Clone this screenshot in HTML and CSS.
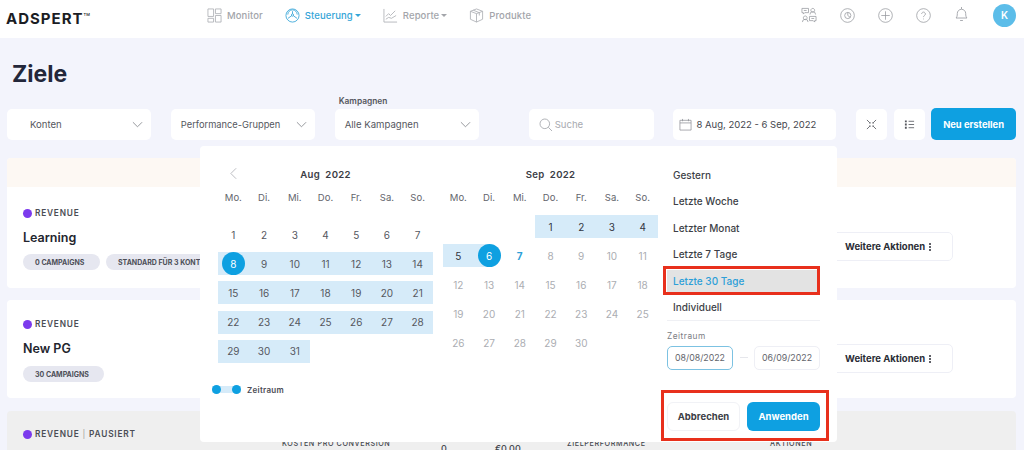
FILE: index.html
```html
<!DOCTYPE html>
<html lang="de">
<head>
<meta charset="utf-8">
<title>Adspert Ziele</title>
<link rel="stylesheet" href="styles.css">
</head>
<body>
<header class="topbar">
  <div class="logo">ADSPERT<sup class="tm">TM</sup></div>
  <nav class="nav">
    <a class="nav-item"><svg class="nav-icon" viewBox="0 0 16 16"><path d="M1 1h6v8H1zM9 1h6v5H9zM9 8h6v7H9zM1 11h6v4H1z"/></svg>Monitor</a>
    <a class="nav-item nav-active"><svg class="nav-icon" viewBox="0 0 16 16"><circle cx="8" cy="8" r="7"/><circle cx="8" cy="7.500" r="1.200"/><path d="M7 8.300 3.200 11M9 8.300l3.800 2.700M8 6.300V3.400M3 7a5 5 0 0 1 10 0"/></svg>Steuerung<i class="caret"></i></a>
    <a class="nav-item"><svg class="nav-icon" viewBox="0 0 16 16"><path d="M1 1v14h14M3 9l3-3 2 2 5-5M3 12l3-2 3 1 5-3"/></svg>Reporte<i class="caret"></i></a>
    <a class="nav-item"><svg class="nav-icon" viewBox="0 0 16 16"><path d="M8 1 14.500 3.500V12L8 15 1.500 12V3.500zM1.500 3.500 8 6l6.500-2.500M8 6v9M4.500 2.300 11 5v3"/></svg>Produkte</a>
  </nav>
  <div class="tools">
    <svg class="tool tool-team" viewBox="0 0 17 17"><path d="M1 1.500h7v4.500H4L2.500 7.500V6H1zM3 3.700h3M12.500 1.500a2 2 0 1 1-.01 0zM9.500 8a3 3 0 0 1 6 0M4.500 9.500a2 2 0 1 1-.01 0zM1.500 16a3 3 0 0 1 6 0M9 10h7v4.500h-1.500V16L13 14.500H9zM11 12.200h3"/></svg>
    <svg class="tool" viewBox="0 0 16 16"><circle cx="8" cy="8" r="7.300"/><circle cx="8.300" cy="8" r="3.300"/><path d="M8.300 4.700V8l2.600 2"/></svg>
    <svg class="tool" viewBox="0 0 16 16"><circle cx="8" cy="8" r="7.300"/><path d="M8 3.500v9M3.500 8h9"/></svg>
    <svg class="tool" viewBox="0 0 16 16"><circle cx="8" cy="8" r="7.300"/><path d="M6 6.300a2 2 0 1 1 3 1.800c-.7.400-1 .8-1 1.600M8 11.300v.8"/></svg>
    <svg class="tool tool-bell" viewBox="0 0 14 16"><path d="M1.500 12c1-1 1.300-2.200 1.300-4.500a4.200 4.200 0 0 1 8.400 0c0 2.300.3 3.500 1.300 4.500zM5.600 14.500h2.800M7 1v2"/></svg>
    <div class="avatar">K</div>
  </div>
</header>

<main class="page">
  <h1 class="title">Ziele</h1>

  <div class="toolbar">
    <div class="select select-konten"><span>Konten</span><svg class="chev" viewBox="0 0 12 7"><path d="M1 1l5 5 5-5"/></svg></div>
    <div class="select select-perf"><span>Performance-Gruppen</span><svg class="chev" viewBox="0 0 12 7"><path d="M1 1l5 5 5-5"/></svg></div>
    <div class="field">
      <label class="field-label">Kampagnen</label>
      <div class="select select-camp"><span>Alle Kampagnen</span><svg class="chev" viewBox="0 0 12 7"><path d="M1 1l5 5 5-5"/></svg></div>
    </div>
    <div class="box search"><svg class="search-icon" viewBox="0 0 14 14"><circle cx="5.800" cy="5.800" r="4.800"/><path d="M9.300 9.300 13 13"/></svg><span>Suche</span></div>
    <div class="box datebox"><svg class="cal-icon" viewBox="0 0 14 14"><path d="M1 2.500h12V13H1zM1 5.300h12M3.800 1v2.500M10.200 1v2.500"/></svg><span>8 Aug, 2022 - 6 Sep, 2022</span></div>
    <div class="box iconbox iconbox-a"><svg class="mini" viewBox="0 0 12 12"><path d="M1 1l3 3M11 1 8 4M1 11l3-3M11 11 8 8"/><path class="mini-dot" d="M3.500 3.500h1.500v1.500H3.500zM7 3.500h1.500v1.500H7zM3.500 7h1.500v1.500H3.500zM7 7h1.500v1.500H7z"/></svg></div>
    <div class="box iconbox iconbox-b"><svg class="mini" viewBox="0 0 12 12"><path d="M5 2.500h6M5 6h6M5 9.500h6"/><path class="mini-dot" d="M1 1.500h2v2H1zM1 8.500h2v2H1zM1 5h2v2H1z"/></svg></div>
    <button class="btn-new">Neu erstellen</button>
  </div>

  <section class="card card-first">
    <div class="notice"></div>
    <div class="card-body">
      <div class="card-info">
        <div class="goal"><i class="goal-dot"></i>REVENUE</div>
        <div class="name">Learning</div>
        <div class="pills"><span class="pill pill-a">0 CAMPAIGNS</span><span class="pill">STANDARD FÜR 3 KONTEN</span></div>
      </div>
      <button class="more">Weitere Aktionen<i class="dots"></i></button>
    </div>
  </section>

  <section class="card card-second">
    <div class="card-body">
      <div class="card-info">
        <div class="goal"><i class="goal-dot"></i>REVENUE</div>
        <div class="name">New PG</div>
        <div class="pills"><span class="pill pill-b">30 CAMPAIGNS</span></div>
      </div>
      <button class="more">Weitere Aktionen<i class="dots"></i></button>
    </div>
  </section>

  <section class="card card-paused">
    <div class="goal"><i class="goal-dot"></i>REVENUE<span class="sep">|</span>PAUSIERT</div>
    <div class="metric">KOSTEN PRO CONVERSION</div>
    <div class="value">0</div>
    <div class="value">€0,00</div>
    <div class="metric">ZIELPERFORMANCE</div>
    <div class="metric">AKTIONEN</div>
  </section>
</main>

<div class="picker">
  <div class="month month-aug">
    <div class="month-title"><svg class="prev" viewBox="0 0 8 14"><path d="M7 1 1 7l6 6"/></svg>Aug&nbsp; 2022</div>
    <div class="week"><span>Mo.</span><span>Di.</span><span>Mi.</span><span>Do.</span><span>Fr.</span><span>Sa.</span><span>So.</span></div>
    <div class="days">
      <span>1</span><span>2</span><span>3</span><span>4</span><span>5</span><span>6</span><span>7</span>
      <span class="in edge"><b>8</b></span><span class="in">9</span><span class="in">10</span><span class="in">11</span><span class="in">12</span><span class="in">13</span><span class="in">14</span>
      <span class="in">15</span><span class="in">16</span><span class="in">17</span><span class="in">18</span><span class="in">19</span><span class="in">20</span><span class="in">21</span>
      <span class="in">22</span><span class="in">23</span><span class="in">24</span><span class="in">25</span><span class="in">26</span><span class="in">27</span><span class="in">28</span>
      <span class="in">29</span><span class="in">30</span><span class="in">31</span>
    </div>
    <div class="legend"><span class="legend-track"><i></i><i></i></span>Zeitraum</div>
  </div>
  <div class="month month-sep">
    <div class="month-title">Sep&nbsp; 2022</div>
    <div class="week"><span>Mo.</span><span>Di.</span><span>Mi.</span><span>Do.</span><span>Fr.</span><span>Sa.</span><span>So.</span></div>
    <div class="days">
      <span></span><span></span><span></span><span class="in dark">1</span><span class="in dark">2</span><span class="in dark">3</span><span class="in dark">4</span>
      <span class="in dark">5</span><span class="in edge edge-end"><b>6</b></span><span class="today">7</span><span class="off">8</span><span class="off">9</span><span class="off">10</span><span class="off">11</span>
      <span class="off">12</span><span class="off">13</span><span class="off">14</span><span class="off">15</span><span class="off">16</span><span class="off">17</span><span class="off">18</span>
      <span class="off">19</span><span class="off">20</span><span class="off">21</span><span class="off">22</span><span class="off">23</span><span class="off">24</span><span class="off">25</span>
      <span class="off">26</span><span class="off">27</span><span class="off">28</span><span class="off">29</span><span class="off">30</span>
    </div>
  </div>
  <div class="side">
    <ul class="ranges">
      <li>Gestern</li>
      <li>Letzte Woche</li>
      <li>Letzter Monat</li>
      <li>Letzte 7 Tage</li>
      <li class="range-on">Letzte 30 Tage</li>
      <li>Individuell</li>
    </ul>
    <div class="period">
      <div class="period-label">Zeitraum</div>
      <div class="period-row">
        <div class="date-input date-focus">08/08/2022</div>
        <i class="dash"></i>
        <div class="date-input">06/09/2022</div>
      </div>
    </div>
    <div class="actions">
      <button class="btn-cancel">Abbrechen</button>
      <button class="btn-apply">Anwenden</button>
    </div>
  </div>
  <div class="mark mark-range"></div>
  <div class="mark mark-actions"></div>
</div>
</body>
</html>
```

FILE: styles.css
```css
* { box-sizing: border-box; }
html, body { margin: 0; height: 450px; overflow: hidden; }
body { position: relative; background: #f3f4fc; font-family: Inter, "Liberation Sans", sans-serif; color: #33363f; }
ul { list-style: none; margin: 0; padding: 0; }
button { font-family: inherit; border: 0; padding: 0; }

/* top bar */
.topbar { display: flex; align-items: center; height: 38px; background: #fff; padding: 0 8px 8px 6px; }
.logo { width: 201px; font-size: 15px; font-weight: 700; letter-spacing: 1px; color: #1b1d24; margin-top: 7px; line-height: 18px; }
.tm { font-size: 4px; vertical-align: 8px; line-height: 0; font-weight: 500; letter-spacing: 0; }
.nav { display: flex; gap: 22px; align-items: center; margin-top: 1px; }
.nav-item { display: flex; align-items: center; font-size: 9.500px; font-weight: 500; color: #a3a5aa; letter-spacing: .1px; line-height: 14px; }
.nav-icon { width: 15px; height: 15px; margin-right: 5px; fill: none; stroke: #adafb4; stroke-width: .9; }
.nav-active { color: #35a5d8; }
.nav-active .nav-icon { stroke: #35a5d8; }
.caret { width: 0; height: 0; margin-left: 2px; border: 3px solid transparent; border-top: 3px solid currentColor; border-bottom: 0; }
.tools { display: flex; align-items: center; margin-left: auto; gap: 23px; }
.tool { width: 15px; height: 15px; fill: none; stroke: #96989e; stroke-width: .8; }
.tool-team { width: 16px; height: 16px; }
.tool-bell { height: 16px; margin-top: -3px; }
.avatar { width: 23px; height: 23px; margin-left: 1px; border-radius: 50%; background: #5cbde9; color: #fff; font-size: 10px; font-weight: 600; display: flex; align-items: center; justify-content: center; }

/* page */
.page { padding: 21px 8px 0 7px; }
.title { margin: 0 0 0 5px; font-size: 23px; line-height: 30px; font-weight: 700; color: #23273a; }
.toolbar { display: flex; align-items: flex-end; margin-top: 7px; height: 44px; }
.select, .box { display: flex; align-items: center; height: 31px; background: #fff; border-radius: 5px; font-size: 9.600px; color: #55575e; }
.select { justify-content: space-between; padding-right: 8px; padding-bottom: 1px; }
.chev { width: 11px; height: 7px; fill: none; stroke: #8d8f95; stroke-width: 1; }
.select-konten { width: 144px; padding-left: 23px; }
.select-perf { width: 144px; margin-left: 20px; padding-left: 10px; font-size: 9.300px; }
.field { margin-left: 20px; }
.field-label { display: block; font-size: 8.400px; font-weight: 600; line-height: 11px; margin: 0 0 2px 4px; color: #55575e; }
.select-camp { width: 144px; padding-left: 10px; }
.search { width: 126px; margin-left: 50px; padding-left: 10px; color: #a8aab0; }
.search-icon { width: 14px; height: 14px; margin-right: 2px; fill: none; stroke: #a8aab0; stroke-width: .9; }
.datebox { width: 163px; margin-left: 19px; padding-left: 6px; font-size: 9.500px; color: #44464d; }
.cal-icon { width: 13px; height: 13px; margin-right: 4px; fill: none; stroke: #8f9197; stroke-width: .8; }
.iconbox { width: 31px; justify-content: center; }
.iconbox-a { margin-left: 20px; }
.iconbox-b { margin-left: 7px; }
.mini { width: 11px; height: 11px; fill: none; stroke: #55575e; stroke-width: .9; }
.mini-dot { fill: #55575e; stroke: none; }
.btn-new { width: 85px; height: 32px; margin-left: 6px; background: #0ea0e1; color: #fff; border-radius: 5px; font-size: 9.400px; font-weight: 700; }

/* cards */
.card { width: 1009px; background: #fff; border-radius: 4px; overflow: hidden; }
.card-first { margin-top: 18px; height: 130px; }
.card-second { margin-top: 12px; height: 98px; }
.card-paused { margin-top: 13px; height: 60px; background: #efefef; display: grid; grid-template-columns: 259px 159px 54px 72px 203px 1fr; padding: 17px 0 0 16px; }
.notice { height: 29px; background: #fdf8f3; }
.card-body { display: flex; justify-content: space-between; align-items: flex-end; padding: 20px 63px 0 16px; }
.card-second .card-body { padding-top: 18px; }
.card-info { width: 500px; }
.goal { display: flex; align-items: center; height: 12px; font-size: 8.300px; font-weight: 600; letter-spacing: .8px; color: #4b4d55; white-space: nowrap; }
.goal-dot { width: 9px; height: 9px; border-radius: 50%; background: #7c3aed; margin-right: 3px; }
.sep { margin: 0 3px; font-weight: 400; color: #999; }
.name { margin-top: 11px; font-size: 12.500px; line-height: 16px; font-weight: 600; color: #23252e; }
.pills { display: flex; gap: 6px; margin-top: 8px; }
.card-second .pills { margin-top: 9px; }
.pill { display: flex; align-items: center; height: 16px; padding: 0 12px; background: #e6e7f0; border-radius: 8px; font-size: 7px; font-weight: 700; color: #4d4f58; white-space: nowrap; }
.pill-a { width: 77px; }
.pill-b { width: 81px; }
.more { display: flex; align-items: center; width: 123px; height: 29px; margin-bottom: 9px; padding-left: 14px; background: #fff; border: 1px solid #eeeff6; border-radius: 5px; font-size: 9.500px; font-weight: 700; color: #2b2d36; white-space: nowrap; }
.dots { width: 2px; height: 2px; margin-left: 4px; border-radius: 50%; background: #2b2d36; box-shadow: 0 -3px 0 #2b2d36, 0 3px 0 #2b2d36; }
.metric { margin-top: 10px; font-size: 7.200px; line-height: 12px; font-weight: 500; letter-spacing: .6px; color: #44464d; white-space: nowrap; }
.value { margin-top: 15px; font-size: 9px; line-height: 12px; font-weight: 500; color: #44464d; }

/* date picker */
.picker { position: absolute; left: 200px; top: 146px; width: 637px; height: 296px; display: flex; gap: 10px; padding: 22px 17px 0 18px; background: #fff; border-radius: 4px; }
.month { width: 215px; }
.month-title { position: relative; height: 14px; font-size: 9.600px; line-height: 14px; font-weight: 600; letter-spacing: .3px; text-align: center; color: #3b3d45; }
.prev { position: absolute; left: 12px; top: -1px; width: 7px; height: 13px; fill: none; stroke: #a8aab0; stroke-width: .9; }
.week, .days { display: grid; grid-template-columns: repeat(7, 1fr); }
.week { margin-top: 9px; font-size: 9.500px; line-height: 14px; text-align: center; color: #63656c; }
.days { grid-auto-rows: 23px; row-gap: 6.200px; font-size: 10px; color: #55575e; }
.month-aug .days { margin-top: 18px; }
.month-sep .days { margin-top: 10px; }
.days span { display: flex; align-items: center; justify-content: center; }
.days .in { background: #d6ebf9; }
.days .dark { color: #33363f; }
.days .off { color: #abadb2; }
.days .today { color: #2d9fd8; font-weight: 700; }
.days .edge b { display: flex; align-items: center; justify-content: center; width: 23px; height: 23px; border-radius: 50%; background: #0ea0e1; color: #fff; font-weight: 400; }
.days .edge-end { background: linear-gradient(to right, #d6ebf9 50%, #fff 50%); }
.legend { display: flex; align-items: center; margin: 22px 0 0 -6px; font-size: 8px; font-weight: 600; letter-spacing: .3px; color: #4b4d55; }
.legend-track { display: flex; justify-content: space-between; width: 29px; height: 9px; margin-right: 6px; background: linear-gradient(#fff 1px, #d6ebf9 1px, #d6ebf9 8px, #fff 8px); }
.legend-track i { width: 9px; height: 9px; border-radius: 50%; background: #0ea0e1; }
.side { width: 153px; margin-left: -1px; }
.ranges { display: flex; flex-direction: column; gap: 4.400px; margin-top: -4px; border-bottom: 1px solid #eff0f4; padding-bottom: 2px; }
.ranges li { display: flex; align-items: center; width: 151px; height: 22px; padding-left: 6px; font-size: 10px; font-weight: 500; color: #3d3f47; }
.ranges .range-on { background: #e3e3e3; color: #2d9fd8; }
.period { margin-top: 9px; }
.period-label { font-size: 8.300px; line-height: 12px; letter-spacing: .5px; color: #7b7d84; }
.period-row { display: flex; align-items: center; margin-top: 4px; justify-content: space-between; }
.date-input { display: flex; align-items: center; justify-content: center; width: 66px; height: 24px; border: 1px solid #eeeff5; border-radius: 5px; font-size: 8.800px; color: #63656c; }
.date-focus { border-color: #7cc2e2; }
.dash { width: 8px; height: 1px; background: #e6e7ec; }
.actions { display: flex; justify-content: space-between; margin-top: 32px; }
.btn-cancel, .btn-apply { width: 73px; height: 29px; border-radius: 6px; font-size: 9.500px; font-weight: 700; }
.btn-cancel { background: #fff; border: 1px solid #f1f2f6; color: #3b3d45; }
.btn-apply { background: #0ea0e1; color: #fff; }
.mark { position: absolute; border: 3px solid #e8301c; }
.mark-range { left: 463px; top: 120px; width: 157px; height: 29px; }
.mark-actions { left: 461px; top: 244px; width: 168px; height: 51px; }
```
